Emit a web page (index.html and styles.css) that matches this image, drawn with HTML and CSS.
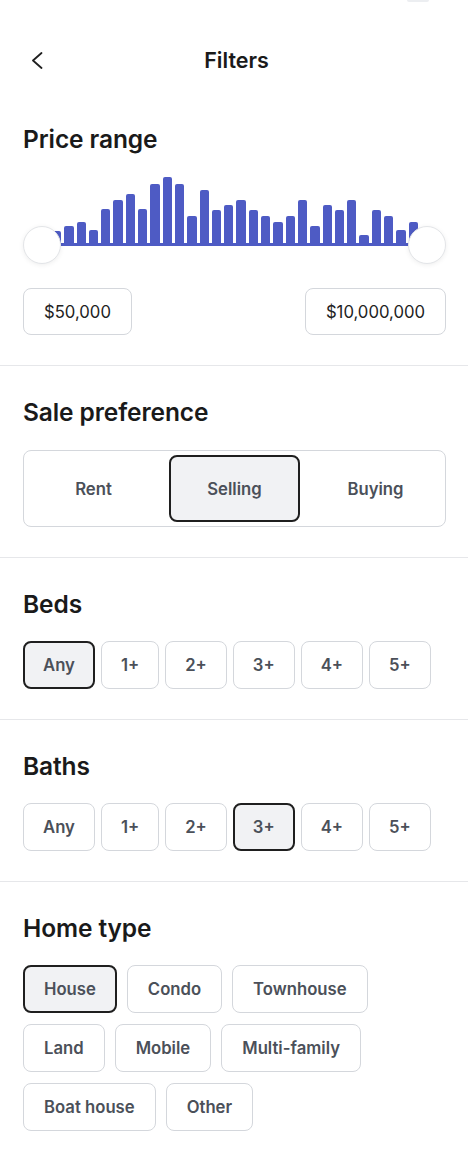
FILE: index.html
```html
<!DOCTYPE html>
<html lang="en">
<head>
<meta charset="utf-8">
<title>Filters</title>
<link rel="stylesheet" href="styles.css">
</head>
<body>
<div class="screen">
  <div class="top-notch"></div>
  <header class="header">
    <button class="back" aria-label="Back">
      <svg width="12" height="17" viewBox="0 0 12 17"><polyline points="10.5,1 2,8.5 10.5,16" fill="none" stroke="#1f1f1f" stroke-width="1.8" stroke-linecap="round" stroke-linejoin="round"/></svg>
    </button>
    <h1 class="title">Filters</h1>
    <span class="spacer"></span>
  </header>

  <section class="section section-first">
    <h2 class="heading">Price range</h2>
    <div class="slider">
      <div class="bars">
        <span class="bar" style="height:15px"></span>
        <span class="bar" style="height:20px"></span>
        <span class="bar" style="height:24px"></span>
        <span class="bar" style="height:16px"></span>
        <span class="bar" style="height:37px"></span>
        <span class="bar" style="height:46px"></span>
        <span class="bar" style="height:52px"></span>
        <span class="bar" style="height:37px"></span>
        <span class="bar" style="height:62px"></span>
        <span class="bar" style="height:69px"></span>
        <span class="bar" style="height:62px"></span>
        <span class="bar" style="height:30px"></span>
        <span class="bar" style="height:56px"></span>
        <span class="bar" style="height:36px"></span>
        <span class="bar" style="height:41px"></span>
        <span class="bar" style="height:46px"></span>
        <span class="bar" style="height:36px"></span>
        <span class="bar" style="height:30px"></span>
        <span class="bar" style="height:24px"></span>
        <span class="bar" style="height:30px"></span>
        <span class="bar" style="height:46px"></span>
        <span class="bar" style="height:20px"></span>
        <span class="bar" style="height:41px"></span>
        <span class="bar" style="height:36px"></span>
        <span class="bar" style="height:46px"></span>
        <span class="bar" style="height:11px"></span>
        <span class="bar" style="height:36px"></span>
        <span class="bar" style="height:30px"></span>
        <span class="bar" style="height:16px"></span>
        <span class="bar" style="height:24px"></span>
      </div>
      <span class="thumb thumb-left"></span>
      <span class="thumb thumb-right"></span>
    </div>
    <div class="price-row">
      <div class="price-box">$50,000</div>
      <div class="price-box">$10,000,000</div>
    </div>
  </section>

  <section class="section">
    <h2 class="heading">Sale preference</h2>
    <div class="segmented">
      <button class="seg">Rent</button>
      <button class="seg active">Selling</button>
      <button class="seg">Buying</button>
    </div>
  </section>

  <section class="section section-chips">
    <h2 class="heading">Beds</h2>
    <div class="chips chips-tight">
      <button class="chip active">Any</button>
      <button class="chip">1+</button>
      <button class="chip">2+</button>
      <button class="chip">3+</button>
      <button class="chip">4+</button>
      <button class="chip">5+</button>
    </div>
  </section>

  <section class="section section-chips">
    <h2 class="heading">Baths</h2>
    <div class="chips chips-tight">
      <button class="chip">Any</button>
      <button class="chip">1+</button>
      <button class="chip">2+</button>
      <button class="chip active">3+</button>
      <button class="chip">4+</button>
      <button class="chip">5+</button>
    </div>
  </section>

  <section class="section section-chips section-last">
    <h2 class="heading">Home type</h2>
    <div class="chips chips-wrap">
      <button class="chip active">House</button>
      <button class="chip">Condo</button>
      <button class="chip">Townhouse</button>
      <button class="chip">Land</button>
      <button class="chip">Mobile</button>
      <button class="chip">Multi-family</button>
      <button class="chip">Boat house</button>
      <button class="chip">Other</button>
    </div>
  </section>
</div>
</body>
</html>
```

FILE: styles.css
```css
* { box-sizing: border-box; }

html, body {
  margin: 0;
  padding: 0;
  background: #ffffff;
}

body {
  font-family: Inter, "Noto Sans", "Liberation Sans", sans-serif;
  color: #1a1a1a;
}

.screen {
  position: relative;
  width: 468px;
  min-height: 1156px;
  padding-top: 24px;
  background: #ffffff;
}

.top-notch {
  position: absolute;
  top: 0;
  left: 407px;
  width: 22px;
  height: 2px;
  background: #eceef1;
  border-radius: 0 0 2px 2px;
}

.header {
  height: 72px;
  padding: 0 22px 0 27px;
  display: flex;
  align-items: center;
  justify-content: space-between;
}

.back {
  width: 20px;
  height: 24px;
  padding: 0;
  border: 0;
  background: transparent;
  display: flex;
  align-items: center;
  justify-content: center;
}

.spacer { width: 20px; }

.title {
  margin: 0;
  font-size: 21.5px;
  line-height: 28px;
  font-weight: 600;
  color: #1a1a1a;
}

.section {
  padding: 32px 22px 30px 23px;
  border-bottom: 1px solid #e6e7ea;
}

.section-first { padding-top: 29px; }

.section-last { border-bottom: 0; }

.heading {
  margin: 0 0 24px 0;
  font-size: 24.5px;
  line-height: 28px;
  font-weight: 600;
  color: #1a1a1a;
  letter-spacing: -0.1px;
}

.section-chips .heading { margin-bottom: 23px; }

/* slider */
.slider {
  position: relative;
  height: 87px;
}

.bars {
  height: 69px;
  margin: 0 28px 0 29px;
  display: flex;
  align-items: flex-end;
  gap: 3px;
  background: linear-gradient(to top, #4e5bc4 3px, transparent 3px);
}

.bar {
  flex: 1 1 0;
  background: #4e5bc4;
  border-radius: 2px 2px 0 0;
}

.thumb {
  position: absolute;
  top: 49px;
  width: 38px;
  height: 38px;
  border-radius: 50%;
  background: #ffffff;
  border: 1px solid #e3e5e8;
  box-shadow: 0 1px 5px rgba(0, 0, 0, 0.07);
}

.thumb-left { left: 0; }
.thumb-right { right: 0; }

.price-row {
  margin-top: 24px;
  display: flex;
  justify-content: space-between;
}

.price-box {
  height: 47px;
  padding: 0 20px;
  display: flex;
  align-items: center;
  border: 1px solid #d4d7dc;
  border-radius: 8px;
  font-size: 16.7px;
  color: #222222;
}

/* segmented */
.segmented {
  height: 77px;
  padding: 4px;
  border: 1px solid #d4d7dc;
  border-radius: 8px;
  display: grid;
  grid-template-columns: 1fr 1fr 1fr;
  gap: 10px;
}

.seg {
  font-family: inherit;
  font-size: 16.7px;
  font-weight: 600;
  color: #4b5059;
  background: transparent;
  border: 2px solid transparent;
  border-radius: 8px;
}

.seg.active {
  background: #f1f2f4;
  border-color: #1f1f1f;
}

/* chips */
.chips {
  display: flex;
}

.chips-tight { gap: 6px; }

.chip {
  height: 48px;
  padding: 0 19px;
  font-family: inherit;
  font-size: 16.7px;
  font-weight: 600;
  color: #4b5059;
  background: #ffffff;
  border: 1px solid #d4d7dc;
  border-radius: 8px;
}

.chip.active {
  background: #f1f2f4;
  border: 2px solid #1f1f1f;
  padding: 0 18px;
}

.chips-wrap {
  flex-wrap: wrap;
  gap: 11px 10px;
  padding-right: 60px;
}

.chips-wrap .chip { padding: 0 20px; }

.chips-wrap .chip.active { padding: 0 19px; }
```
